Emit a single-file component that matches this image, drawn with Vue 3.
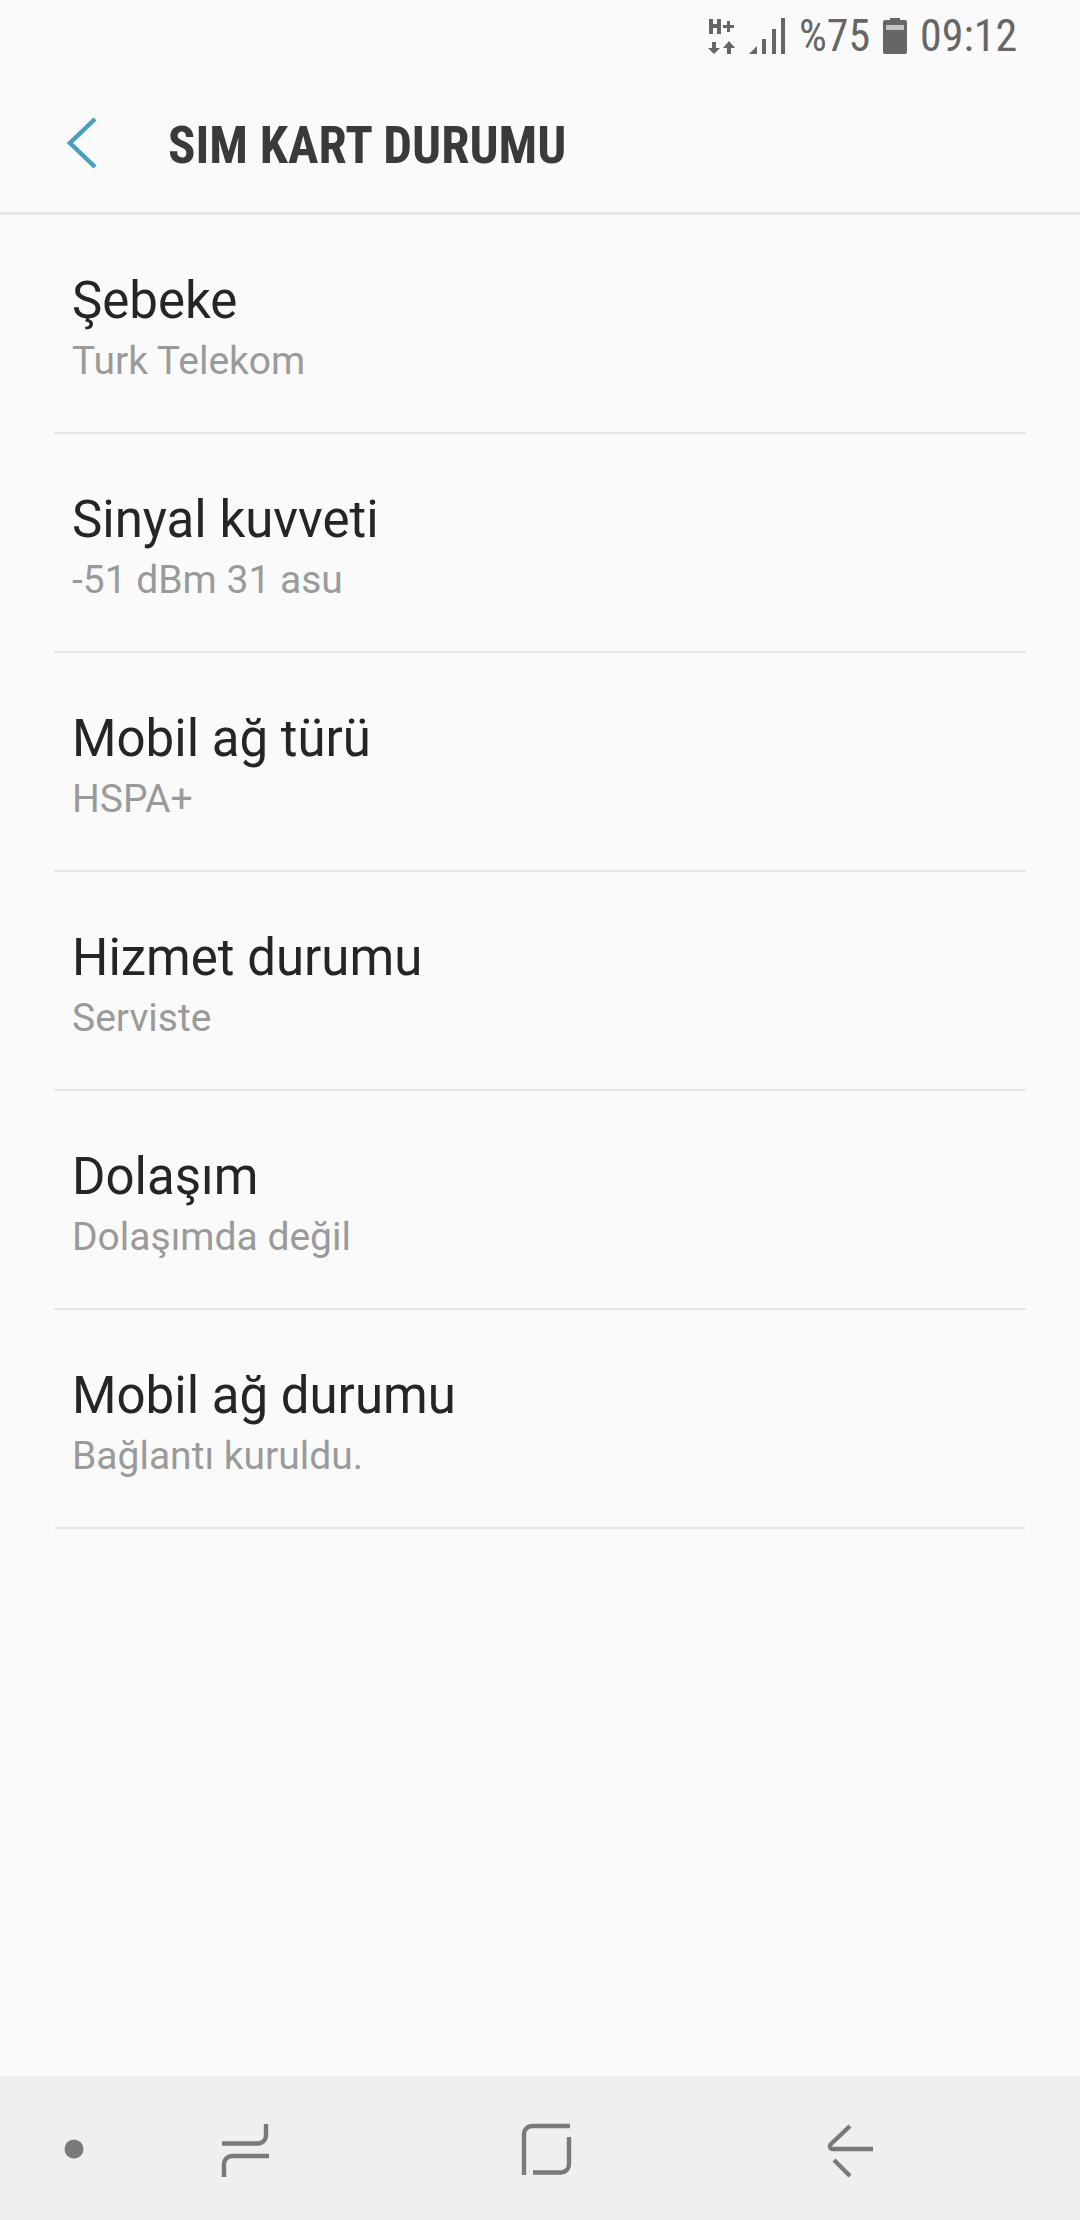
<script setup>
const rows = [
  { title: 'Şebeke', sub: 'Turk Telekom' },
  { title: 'Sinyal kuvveti', sub: '-51 dBm 31 asu' },
  { title: 'Mobil ağ türü', sub: 'HSPA+' },
  { title: 'Hizmet durumu', sub: 'Serviste' },
  { title: 'Dolaşım', sub: 'Dolaşımda değil' },
  { title: 'Mobil ağ durumu', sub: 'Bağlantı kuruldu.' },
]
</script>

<template>
  <div class="screen">
    <div class="status">
      <svg class="net" width="28" height="36" viewBox="0 0 28 36" fill="#666">
        <path d="M1 1h4v5h4V1h4v15H9V10H5v6H1z" />
        <path d="M15 7h4V3h3v4h4v3h-4v4h-3v-4h-4z" />
        <path d="M4 24h4v6h4l-6 6-6-6h4z" />
        <path d="M23 36h-4v-6h-4l6-7 6 7h-4z" />
      </svg>
      <svg class="sig" width="36" height="36" viewBox="0 0 36 36" fill="#666">
        <path d="M0 36l8-8v8z" />
        <rect x="13" y="21" width="4" height="15" />
        <rect x="23" y="11" width="4" height="25" />
        <rect x="32" y="0" width="4" height="36" />
      </svg>
      <span class="st-text pct">%75</span>
      <svg class="bat" width="24" height="36" viewBox="0 0 24 36">
        <path d="M7 0h10v2h5a2 2 0 0 1 2 2v30a2 2 0 0 1-2 2H2a2 2 0 0 1-2-2V4a2 2 0 0 1 2-2h5z" fill="#666" />
        <rect x="3" y="7" width="18" height="5" fill="#c4c4c4" />
      </svg>
      <span class="st-text time">09:12</span>
    </div>

    <header class="head">
      <svg class="chev" width="34" height="54" viewBox="0 0 34 54" fill="none">
        <path d="M29 3L4 27l25 24" stroke="#4a9fbe" stroke-width="4.5" />
      </svg>
      <h1 class="title">SIM KART DURUMU</h1>
    </header>

    <main class="list">
      <div v-for="r in rows" :key="r.title" class="row">
        <div class="r-title">{{ r.title }}</div>
        <div class="r-sub">{{ r.sub }}</div>
      </div>
    </main>

    <nav class="nav">
      <svg class="nav-svg" width="1080" height="144" viewBox="0 2076 1080 144" fill="none" stroke="#7a7a7a" stroke-width="4.4">
        <circle cx="74" cy="2149" r="9.5" fill="#7a7a7a" stroke="none" />
        <path d="M222 2143.5h36a8 8 0 0 0 8-8V2124" />
        <path d="M269 2156h-37a8 8 0 0 0-8 8v13" />
        <path d="M524 2175v-41a8 8 0 0 1 8-8h38" />
        <path d="M533 2172.5h28a8 8 0 0 0 8-8V2137" />
        <path d="M873 2149h-40c-3 0-4-3-2-5l19-18" />
        <path d="M834 2160l16 16" />
      </svg>
    </nav>
  </div>
</template>

<style>
html, body { margin: 0; padding: 0; background: #fafafa; }
</style>

<style scoped>
.screen {
  width: 1080px;
  height: 2220px;
  background: #fafafa;
  display: flex;
  flex-direction: column;
  font-family: Roboto, "Liberation Sans", sans-serif;
  overflow: hidden;
}
.status {
  height: 72px;
  display: flex;
  align-items: center;
  justify-content: flex-end;
  padding-right: 62px;
  box-sizing: border-box;
}
.net { margin-right: 13px; }
.sig { margin-right: 14px; }
.st-text {
  font-size: 44px;
  color: #666;
  display: inline-block;
  line-height: 72px;
  font-stretch: condensed;
}
.pct { width: 72px; margin-right: 12px; }
.bat { margin-right: 13px; }
.time { width: 98px; }
.head {
  height: 143px;
  box-sizing: border-box;
  border-bottom: 3px solid #e8e8e8;
  display: flex;
  align-items: center;
  padding-left: 66px;
  padding-bottom: 4px;
}
.chev { flex: none; margin-top: 6px; }
.title {
  margin: 10px 0 0 68px;
  font-size: 51px;
  font-weight: 700;
  color: #3a3a3a;
  white-space: nowrap;
  font-stretch: condensed;
}
.list {
  flex: 1;
  padding: 0 54px;
}
.row {
  height: 219px;
  box-sizing: border-box;
  border-bottom: 2px solid #e6e6e6;
  padding: 56px 0 0 18px;
}
.r-title {
  font-size: 51px;
  line-height: 60px;
  color: #252525;
}
.r-sub {
  font-size: 39px;
  line-height: 50px;
  margin-top: 5px;
  color: #9a9a9a;
}
.nav {
  height: 144px;
  background: #efefef;
  flex: none;
}
.nav-svg { display: block; }
</style>
